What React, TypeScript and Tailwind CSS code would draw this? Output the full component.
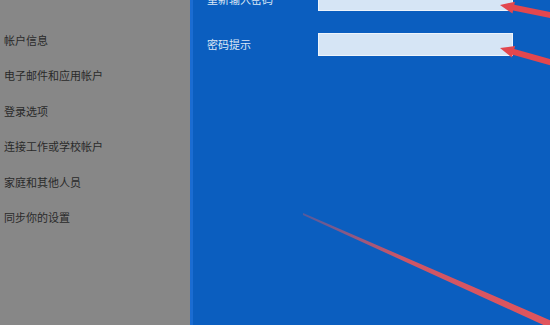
const menu = ['帐户信息', '电子邮件和应用帐户', '登录选项', '连接工作或学校帐户', '家庭和其他人员', '同步你的设置'];

const fields = ['重新输入密码', '密码提示'];

function Annotations() {
  return (
    <svg className="pointer-events-none absolute inset-0" width="550" height="325" viewBox="0 0 550 325">
      <defs>
        <linearGradient id="fade" x1="303" y1="214" x2="550" y2="325" gradientUnits="userSpaceOnUse">
          <stop offset="0" stopColor="#e2555c" stopOpacity="0.35" />
          <stop offset="0.4" stopColor="#e2555c" stopOpacity="0.9" />
          <stop offset="1" stopColor="#e2555c" />
        </linearGradient>
      </defs>
      {/* arrow to first input */}
      <polygon points="500,5 514.9,1.8 514.3,4.8 552.6,12.5 551.4,18.3 513.1,10.6 512.5,13.6" fill="#e2474e" />
      {/* arrow to second input */}
      <polygon points="500,48 515.1,46 514.3,48.9 552.8,59.7 551.2,65.5 512.7,54.7 511.9,57.6" fill="#e2474e" />
      {/* long line */}
      <polygon points="303,213 552,321 550,328 303,215" fill="url(#fade)" />
    </svg>
  );
}

export default function App() {
  return (
    <div
      className="relative flex h-[325px] w-[550px] overflow-hidden"
      style={{ fontFamily: '"Noto Sans CJK SC", "Noto Sans", sans-serif' }}
    >
      <aside className="flex w-[190px] shrink-0 flex-col bg-[#878787] pt-[22px]">
        {menu.map((item) => (
          <div key={item} className="flex h-[35.5px] items-center pl-[4px] text-[11px] text-[#2a2a2a]">
            {item}
          </div>
        ))}
      </aside>

      <main className="flex flex-1 flex-col gap-[22px] border-l-[3px] border-[#1b6cd1] bg-[#0b5ebf] pl-[14px]">
        {fields.map((label, i) => (
          <div key={label} className={`flex items-center ${i === 0 ? '-mt-[12px]' : ''}`}>
            <span className="w-[111px] text-[11px] text-[#dbe8f6]">{label}</span>
            <div className="h-[23px] w-[195px] border border-[#eef4fb] bg-[#d6e5f5]" />
          </div>
        ))}
      </main>

      <Annotations />
    </div>
  );
}
